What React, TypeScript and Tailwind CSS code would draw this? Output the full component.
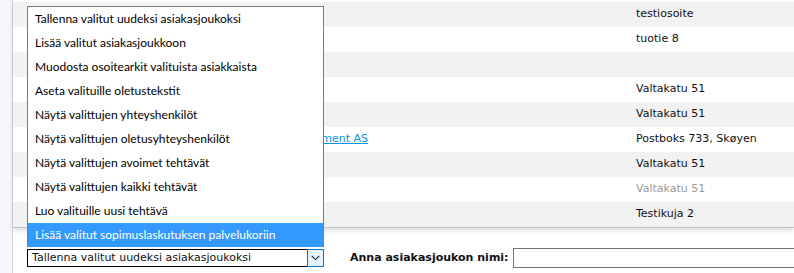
import React from "react";

const rows = [
  { name: "", address: "testiosoite" },
  { name: "", address: "tuotie 8" },
  { name: "", address: "" },
  { name: "", address: "Valtakatu 51" },
  { name: "", address: "Valtakatu 51" },
  { name: "Norsk Asset Management AS", address: "Postboks 733, Skøyen", link: true },
  { name: "", address: "Valtakatu 51" },
  { name: "", address: "Valtakatu 51", muted: true },
  { name: "", address: "Testikuja 2" },
];

const actions = [
  "Tallenna valitut uudeksi asiakasjoukoksi",
  "Lisää valitut asiakasjoukkoon",
  "Muodosta osoitearkit valituista asiakkaista",
  "Aseta valituille oletustekstit",
  "Näytä valittujen yhteyshenkilöt",
  "Näytä valittujen oletusyhteyshenkilöt",
  "Näytä valittujen avoimet tehtävät",
  "Näytä valittujen kaikki tehtävät",
  "Luo valituille uusi tehtävä",
  "Lisää valitut sopimuslaskutuksen palvelukoriin",
];

export default function App() {
  return (
    <div className="relative flex h-[273px] w-[794px] overflow-hidden bg-white font-['DejaVu_Sans',sans-serif] text-[11px] text-[#111]">
      <div className="w-[13px] shrink-0 border-r border-[#cfd3d8] bg-[#f5f7fa]" />

      <div className="flex min-w-0 flex-1 flex-col pt-[2px]">
        {/* customer table */}
        <div className="border-b border-[#c4c4c4] shadow-[0_3px_5px_rgba(0,0,0,0.12)]">
          {rows.map((r, i) => (
            <div
              key={i}
              className={`flex h-[25px] items-center ${i % 2 === 0 ? "bg-[#f2f2f2]" : "bg-white"}`}
            >
              <div className="flex w-[355px] shrink-0 justify-end overflow-hidden whitespace-nowrap">
                {r.link && (
                  <a href="#" className="text-[#0b8ee8] underline">
                    {r.name}
                  </a>
                )}
              </div>
              <div className="w-[268px] shrink-0" />
              <div className={`whitespace-nowrap ${r.muted ? "text-[#9a9a9a]" : ""}`}>{r.address}</div>
            </div>
          ))}
        </div>

        {/* action row */}
        <div className="mt-[20px] flex items-center pl-[14px]">
          <div className="flex h-[18px] w-[297px] shrink-0 items-stretch border border-black bg-white">
            <div className="flex flex-1 items-center whitespace-nowrap pl-[4px]">
              Tallenna valitut uudeksi asiakasjoukoksi
            </div>
            <div className="-my-px -mr-px flex w-[17px] items-center justify-center border border-[#0078d7] bg-[#e5f1fb]">
              <svg width="9" height="6" viewBox="0 0 9 6" fill="none">
                <path d="M0.8 1 L4.5 4.6 L8.2 1" stroke="#333" strokeWidth="1.1" />
              </svg>
            </div>
          </div>
          <span className="ml-[26px] shrink-0 whitespace-nowrap font-bold">Anna asiakasjoukon nimi:</span>
          <input className="ml-[4px] h-[20px] w-[320px] shrink-0 border border-[#767676] bg-white outline-none" />
        </div>
      </div>

      {/* open dropdown list */}
      <ul className="absolute left-[27px] top-[6px] w-[297px] border-x border-t border-[#7a7a7a] bg-white font-['Lato',sans-serif] text-[12px] text-black">
        {actions.map((a, i) => (
          <li
            key={a}
            className={`flex h-[24px] items-center whitespace-nowrap pl-[7px] ${
              i === actions.length - 1 ? "bg-[#3399ff] text-white" : ""
            }`}
          >
            {a}
          </li>
        ))}
      </ul>
    </div>
  );
}
